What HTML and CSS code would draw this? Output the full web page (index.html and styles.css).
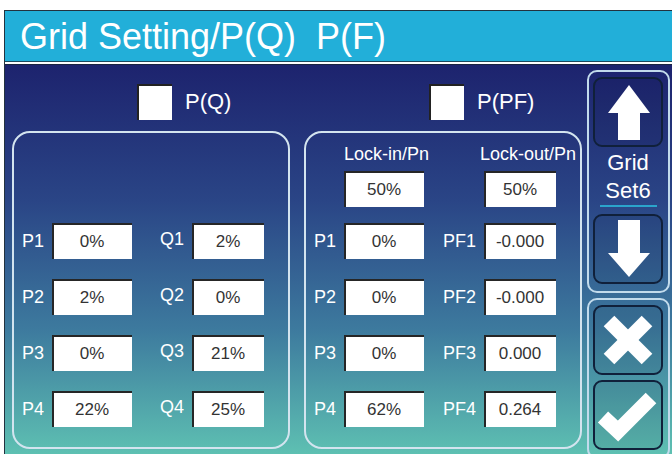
FILE: index.html
```html
<!DOCTYPE html>
<html lang="en">
<head>
  <meta charset="UTF-8" />
  <meta name="viewport" content="width=device-width, initial-scale=1.0" />
  <title>Grid Setting</title>
  <link rel="stylesheet" href="styles.css">
</head>
<body>
  <div class="screen">
    <div class="title">Grid Setting/P(Q)&nbsp;&nbsp;P(F)</div>
    <div class="sep"></div>

    <div class="main">
      <div class="modes">
        <!-- P(Q) -->
        <section class="mode">
          <div class="check-row">
            <span class="check"></span>
            <span class="check-label">P(Q)</span>
          </div>
          <div class="panel">
            <div class="lock"></div>
            <div class="rows">
              <span class="lbl">P1</span><span class="val">0%</span>
              <span class="lbl lbl-hi">Q1</span><span class="val">2%</span>
              <span class="lbl">P2</span><span class="val">2%</span>
              <span class="lbl lbl-hi">Q2</span><span class="val">0%</span>
              <span class="lbl">P3</span><span class="val">0%</span>
              <span class="lbl lbl-hi">Q3</span><span class="val">21%</span>
              <span class="lbl">P4</span><span class="val">22%</span>
              <span class="lbl lbl-hi">Q4</span><span class="val">25%</span>
            </div>
          </div>
        </section>

        <!-- P(PF) -->
        <section class="mode">
          <div class="check-row">
            <span class="check"></span>
            <span class="check-label">P(PF)</span>
          </div>
          <div class="panel">
            <div class="lock">
              <span></span><span class="lock-head">Lock-in/Pn</span>
              <span></span><span class="lock-head lock-out">Lock-out/Pn</span>
              <span></span><span class="val">50%</span>
              <span></span><span class="val">50%</span>
            </div>
            <div class="rows">
              <span class="lbl">P1</span><span class="val">0%</span>
              <span class="lbl">PF1</span><span class="val">-0.000</span>
              <span class="lbl">P2</span><span class="val">0%</span>
              <span class="lbl">PF2</span><span class="val">-0.000</span>
              <span class="lbl">P3</span><span class="val">0%</span>
              <span class="lbl">PF3</span><span class="val">0.000</span>
              <span class="lbl">P4</span><span class="val">62%</span>
              <span class="lbl">PF4</span><span class="val">0.264</span>
            </div>
          </div>
        </section>
      </div>

      <aside class="side">
        <div class="side-box">
          <div class="btn">
            <svg width="66" height="66" viewBox="0 0 66 66"><polygon points="34,6 55,34 45,34 45,61 23,61 23,34 13,34" fill="#fff"/></svg>
          </div>
          <div class="side-text">Grid<br>Set6</div>
          <div class="side-line"></div>
          <div class="btn">
            <svg width="66" height="66" viewBox="0 0 66 66"><polygon points="23,4 45,4 45,37 55,37 34,61 13,37 23,37" fill="#fff"/></svg>
          </div>
        </div>
        <div class="side-box">
          <div class="btn">
            <svg width="66" height="66" viewBox="0 0 66 66">
              <line x1="14" y1="14" x2="52" y2="52" stroke="#fff" stroke-width="15"/>
              <line x1="52" y1="14" x2="14" y2="52" stroke="#fff" stroke-width="15"/>
            </svg>
          </div>
          <div class="btn">
            <svg width="66" height="66" viewBox="0 0 66 66"><polyline points="8,35 23,49 56,16" fill="none" stroke="#fff" stroke-width="15"/></svg>
          </div>
        </div>
      </aside>
    </div>
  </div>
</body>
</html>
```

FILE: styles.css
```css
* {
  box-sizing: border-box;
}
body {
  margin: 0;
  height: 454px;
  overflow: hidden;
  background: #fff;
  font-family: "Liberation Sans", Arial, sans-serif;
}
.screen {
  margin: 10px 0 0 4px;
  border-top: 1px solid #23323f;
  border-left: 1px solid #23323f;
}
.title {
  height: 51px;
  padding-left: 15px;
  background: #22afd9;
  border-bottom: 1px solid #1b4a5e;
  color: #fff;
  font-size: 36px;
  line-height: 52px;
  white-space: nowrap;
}
.sep {
  height: 3px;
  background: #fff;
  border-bottom: 1px solid #1b2340;
}
.main {
  display: flex;
  height: 389px;
  padding: 5px 0 0 7px;
  background: linear-gradient(180deg, #1d236e 0%, #2a4586 35%, #3d7a9e 68%, #5ec0b2 100%);
}
.modes {
  display: flex;
  gap: 14px;
}
.mode {
  width: 278px;
  padding-top: 14px;
}
.check-row {
  display: flex;
  align-items: center;
  gap: 13px;
  height: 36px;
  padding-left: 125px;
}
.check {
  width: 35px;
  height: 36px;
  background: #fff;
  box-shadow: inset 2px 2px 0 #222;
}
.check-label {
  color: #fff;
  font-size: 22px;
}
.panel {
  margin-top: 11px;
  padding: 10px 0 20px;
  border: 2px solid #d3e4ef;
  border-radius: 18px;
}
.lock,
.rows {
  display: grid;
  grid-template-columns: 38px 80px 60px 72px;
}
.lock {
  grid-template-rows: 22px 36px;
  row-gap: 6px;
  height: 64px;
  margin-bottom: 16px;
}
.lock-head {
  color: #fff;
  font-size: 18px;
  line-height: 22px;
  text-align: center;
  white-space: nowrap;
}
.lock-out {
  text-align: left;
  margin-left: -4px;
}
.rows {
  grid-auto-rows: 36px;
  row-gap: 20px;
}
.lbl {
  align-self: center;
  padding-right: 8px;
  color: #fff;
  font-size: 18px;
  text-align: right;
}
.lbl-hi {
  margin-top: -4px;
}
.val {
  display: flex;
  align-items: center;
  justify-content: center;
  padding-top: 2px;
  background: #fff;
  box-shadow: inset 2px 2px 0 #262626;
  color: #333;
  font-size: 17px;
}
.side {
  display: flex;
  flex-direction: column;
  gap: 5px;
  width: 83px;
  margin-left: 5px;
}
.side-box {
  padding: 5px 5px 7px 4px;
  border: 2px solid #c2dbec;
  border-radius: 10px;
}
.side-box + .side-box .btn + .btn {
  margin-top: 5px;
}
.btn {
  display: flex;
  align-items: center;
  justify-content: center;
  width: 70px;
  height: 70px;
  border: 2px solid #10203a;
  border-radius: 9px;
  background: rgba(0, 0, 30, 0.08);
}
.side-text {
  margin-top: 2px;
  color: #fff;
  font-size: 22px;
  line-height: 28px;
  text-align: center;
}
.side-line {
  height: 2px;
  margin: 0 6px 7px 7px;
  background: #2ba5cc;
}
```
